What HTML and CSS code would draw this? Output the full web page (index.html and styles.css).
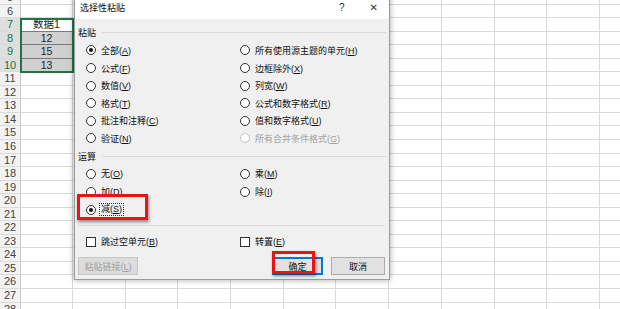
FILE: index.html
```html
<!DOCTYPE html>
<html lang="zh-CN">
<head>
    <meta charset="UTF-8">
    <title>选择性粘贴</title>
    <link rel="stylesheet" href="styles.css">
</head>
<body>
    <div class="sheet" id="sheet"></div>
    <div class="selection"></div>

    <div class="dialog">
        <div class="dialog-title">
            <span>选择性粘贴</span>
            <span class="title-btns"><span class="help">?</span><span class="close">✕</span></span>
        </div>
        <div class="dialog-body">
            <div class="group-label"><span>粘贴</span></div>
            <div class="options">
                <div class="opt"><span class="radio checked"></span><span>全部(<u>A</u>)</span></div>
                <div class="opt"><span class="radio"></span><span>所有使用源主题的单元(<u>H</u>)</span></div>
                <div class="opt"><span class="radio"></span><span>公式(<u>F</u>)</span></div>
                <div class="opt"><span class="radio"></span><span>边框除外(<u>X</u>)</span></div>
                <div class="opt"><span class="radio"></span><span>数值(<u>V</u>)</span></div>
                <div class="opt"><span class="radio"></span><span>列宽(<u>W</u>)</span></div>
                <div class="opt"><span class="radio"></span><span>格式(<u>T</u>)</span></div>
                <div class="opt"><span class="radio"></span><span>公式和数字格式(<u>R</u>)</span></div>
                <div class="opt"><span class="radio"></span><span>批注和注释(<u>C</u>)</span></div>
                <div class="opt"><span class="radio"></span><span>值和数字格式(<u>U</u>)</span></div>
                <div class="opt"><span class="radio"></span><span>验证(<u>N</u>)</span></div>
                <div class="opt disabled"><span class="radio"></span><span>所有合并条件格式(<u>G</u>)</span></div>
            </div>

            <div class="group-label ops-label"><span>运算</span></div>
            <div class="options ops">
                <div class="opt"><span class="radio"></span><span>无(<u>O</u>)</span></div>
                <div class="opt"><span class="radio"></span><span>乘(<u>M</u>)</span></div>
                <div class="opt"><span class="radio"></span><span>加(<u>D</u>)</span></div>
                <div class="opt"><span class="radio"></span><span>除(<u>I</u>)</span></div>
                <div class="opt"><span class="radio checked"></span><span class="focus">减(<u>S</u>)</span></div>
            </div>

            <div class="sep"></div>

            <div class="options checks">
                <div class="opt"><span class="checkbox"></span><span>跳过空单元(<u>B</u>)</span></div>
                <div class="opt"><span class="checkbox"></span><span>转置(<u>E</u>)</span></div>
            </div>

            <div class="buttons">
                <button class="btn btn-link" disabled>粘贴链接(<u>L</u>)</button>
                <span class="spacer"></span>
                <button class="btn btn-ok">确定</button>
                <button class="btn btn-cancel">取消</button>
            </div>
        </div>
    </div>

    <div class="mark mark-sub"></div>
    <div class="mark mark-ok"></div>

    <script>
        const sheet = document.getElementById('sheet');
        const values = { 7: '数据1', 8: '12', 9: '15', 10: '13' };

        for (let r = 5; r <= 28; r++) {
            const head = document.createElement('div');
            head.className = 'rh' + (values[r] ? ' sel' : '');
            head.textContent = r;
            sheet.appendChild(head);

            for (let c = 0; c < 12; c++) {
                const cell = document.createElement('div');
                cell.className = 'cell';
                if (c === 0 && values[r]) {
                    cell.className += r === 7 ? ' title-cell' : ' data';
                    cell.textContent = values[r];
                }
                sheet.appendChild(cell);
            }
        }
    </script>
</body>
</html>
```

FILE: styles.css
```css
* {
    box-sizing: border-box;
}
html, body {
    margin: 0;
}
body {
    width: 620px;
    height: 309px;
    overflow: hidden;
    position: relative;
    background: #fff;
    font-family: "Liberation Sans", "Noto Sans CJK SC", sans-serif;
}

/* worksheet */
.sheet {
    display: grid;
    grid-template-columns: 21px 52px repeat(11, 52.7px);
    grid-auto-rows: 13.55px;
    margin-top: -9px;
}
.rh {
    background: #f3f3f3;
    border-right: 1px solid #c8c8c8;
    border-bottom: 1px solid #dadada;
    color: #444;
    font-size: 11px;
    line-height: 13px;
    text-align: center;
}
.rh.sel {
    background: #dedede;
    color: #217346;
}
.cell {
    border-right: 1px solid #dadada;
    border-bottom: 1px solid #dadada;
    color: #222;
    font-size: 10.5px;
    line-height: 13px;
    text-align: center;
}
.cell.title-cell {
    border-bottom-color: #7a7a7a;
}
.cell.data {
    background: #d0d0d0;
    border-bottom-color: #7a7a7a;
}
.selection {
    position: absolute;
    left: 20px;
    top: 18px;
    width: 54px;
    height: 55px;
    border: 2px solid #217346;
}

/* dialog */
.dialog {
    position: absolute;
    left: 74px;
    top: -5px;
    width: 316px;
    height: 285px;
    background: #f0f0f0;
    border: 1px solid #9a9a9a;
    box-shadow: 0 0 6px rgba(0, 0, 0, 0.35);
    font-family: "Liberation Sans", "Noto Sans CJK SC", sans-serif;
    font-size: 9px;
    color: #111;
}
.dialog u {
    text-decoration: underline;
}
.dialog-title {
    height: 23px;
    background: #fff;
    display: flex;
    align-items: center;
    padding-left: 5px;
}
.title-btns {
    margin-left: auto;
    display: flex;
    align-items: center;
}
.help {
    font-size: 10px;
    color: #333;
    margin-right: 25px;
}
.close {
    font-family: "DejaVu Sans", sans-serif;
    font-size: 10px;
    color: #333;
    margin-right: 11px;
}
.dialog-body {
    padding: 0 3px;
}
.group-label {
    display: flex;
    align-items: center;
    gap: 6px;
    height: 14px;
    margin-top: 6px;
}
.group-label::after {
    content: "";
    flex: 1;
    border-top: 1px solid #dcdcdc;
}
.ops-label {
    margin-top: 2px;
}
.options {
    display: grid;
    grid-template-columns: 154px 1fr;
    grid-auto-rows: 17.6px;
    padding-left: 8px;
    margin-top: 2.7px;
}
.ops {
    grid-auto-rows: 18px;
    margin-top: 1.3px;
}
.opt {
    display: flex;
    align-items: center;
    gap: 5px;
    white-space: nowrap;
}
.opt.disabled {
    color: #a3a3a3;
}
.radio {
    width: 10px;
    height: 10px;
    border: 1px solid #333;
    border-radius: 50%;
    background: #fff;
    display: inline-flex;
    align-items: center;
    justify-content: center;
    flex: none;
}
.radio.checked::after {
    content: "";
    width: 4px;
    height: 4px;
    border-radius: 50%;
    background: #111;
}
.disabled .radio {
    border-color: #c4c4c4;
}
.focus {
    border: 1px dotted #333;
    padding: 0 1px;
    margin-left: -2px;
    line-height: 11px;
}
.sep {
    border-top: 1px solid #dcdcdc;
    margin-top: 6.5px;
    margin-right: 1px;
}
.checks {
    grid-auto-rows: 17px;
    margin-top: 7px;
}
.checkbox {
    width: 10px;
    height: 10px;
    border: 1px solid #333;
    background: #fff;
    flex: none;
}
.buttons {
    display: flex;
    gap: 8px;
    margin-top: 7px;
    padding-right: 1px;
}
.spacer {
    flex: 1;
}
.btn {
    height: 18px;
    padding: 0;
    background: #e1e1e1;
    border: 1px solid #adadad;
    font-family: "Liberation Sans", "Noto Sans CJK SC", sans-serif;
    font-size: 9px;
    color: #111;
}
.btn-link {
    width: 60px;
    color: #a0a0a0;
    border-color: #c6c6c6;
    background: #dcdcdc;
}
.btn-ok {
    width: 51px;
    border: 2px solid #0078d7;
}
.btn-cancel {
    width: 54px;
}

/* red highlight marks */
.mark {
    position: absolute;
    border: 3px solid #e8141c;
    box-shadow: 1px 2px 3px rgba(0, 0, 0, 0.45);
}
.mark-sub {
    left: 77px;
    top: 194px;
    width: 71px;
    height: 26px;
}
.mark-ok {
    left: 272px;
    top: 251px;
    width: 43px;
    height: 23px;
}
```
